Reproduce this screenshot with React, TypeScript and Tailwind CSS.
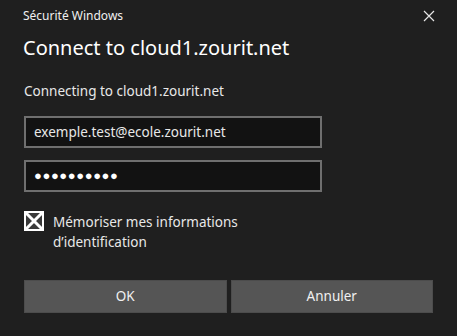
export default function App() {
  return (
    <div
      className="w-[457px] h-[336px] bg-[#1f1f1f] text-white overflow-hidden flex flex-col px-[24px]"
      style={{ fontFamily: '"Noto Sans", "Open Sans", sans-serif' }}
    >
      {/* title bar */}
      <div className="flex items-center justify-between h-[32px] -ml-px">
        <span className="text-[12px] text-[#f0f0f0]">Sécurité Windows</span>
        <svg width="12" height="12" viewBox="0 0 12 12" className="mr-[-2px]">
          <path d="M1 1 L11 11 M11 1 L1 11" stroke="#e6e6e6" strokeWidth="1.2" />
        </svg>
      </div>

      <h1 className="text-[20px] leading-[28px] mt-[2px] -ml-px text-white">Connect to cloud1.zourit.net</h1>

      <p className="text-[13.5px] leading-[18px] mt-[20px] text-[#e8e8e8]">Connecting to cloud1.zourit.net</p>

      <div className="mt-[16px] w-[298px] h-[32px] border-2 border-[#6f6f6f] bg-[#121212] flex items-center px-[8px] text-[13.5px] text-[#e8e8e8]">
        exemple.test@ecole.zourit.net
      </div>
      <div className="mt-[12px] w-[298px] h-[32px] border-2 border-[#6f6f6f] bg-[#121212] flex items-center px-[8px] text-[13px] tracking-[0.6px] text-white">
        ●●●●●●●●●●
      </div>

      <div className="flex items-start mt-[19px]">
        <svg width="20" height="20" viewBox="0 0 20 20" className="shrink-0">
          <rect x="0" y="0" width="20" height="20" fill="#ffffff" />
          <rect x="2" y="2" width="16" height="16" fill="#3a3a3a" />
          <path d="M2 2 L18 18 M18 2 L2 18" stroke="#ffffff" strokeWidth="3" />
        </svg>
        <span className="ml-[9px] text-[13.5px] leading-[20px] mt-[1px] text-[#e8e8e8] w-[200px]">
          Mémoriser mes informations d’identification
        </span>
      </div>

      <div className="flex gap-[4px] mt-[28px] w-[409px]">
        <button className="flex-1 h-[33px] bg-[#555555] border border-[#4c4c4c] text-[13.5px] text-[#f0f0f0]">OK</button>
        <button className="flex-1 h-[33px] bg-[#555555] border border-[#4c4c4c] text-[13.5px] text-[#f0f0f0]">Annuler</button>
      </div>
    </div>
  );
}
